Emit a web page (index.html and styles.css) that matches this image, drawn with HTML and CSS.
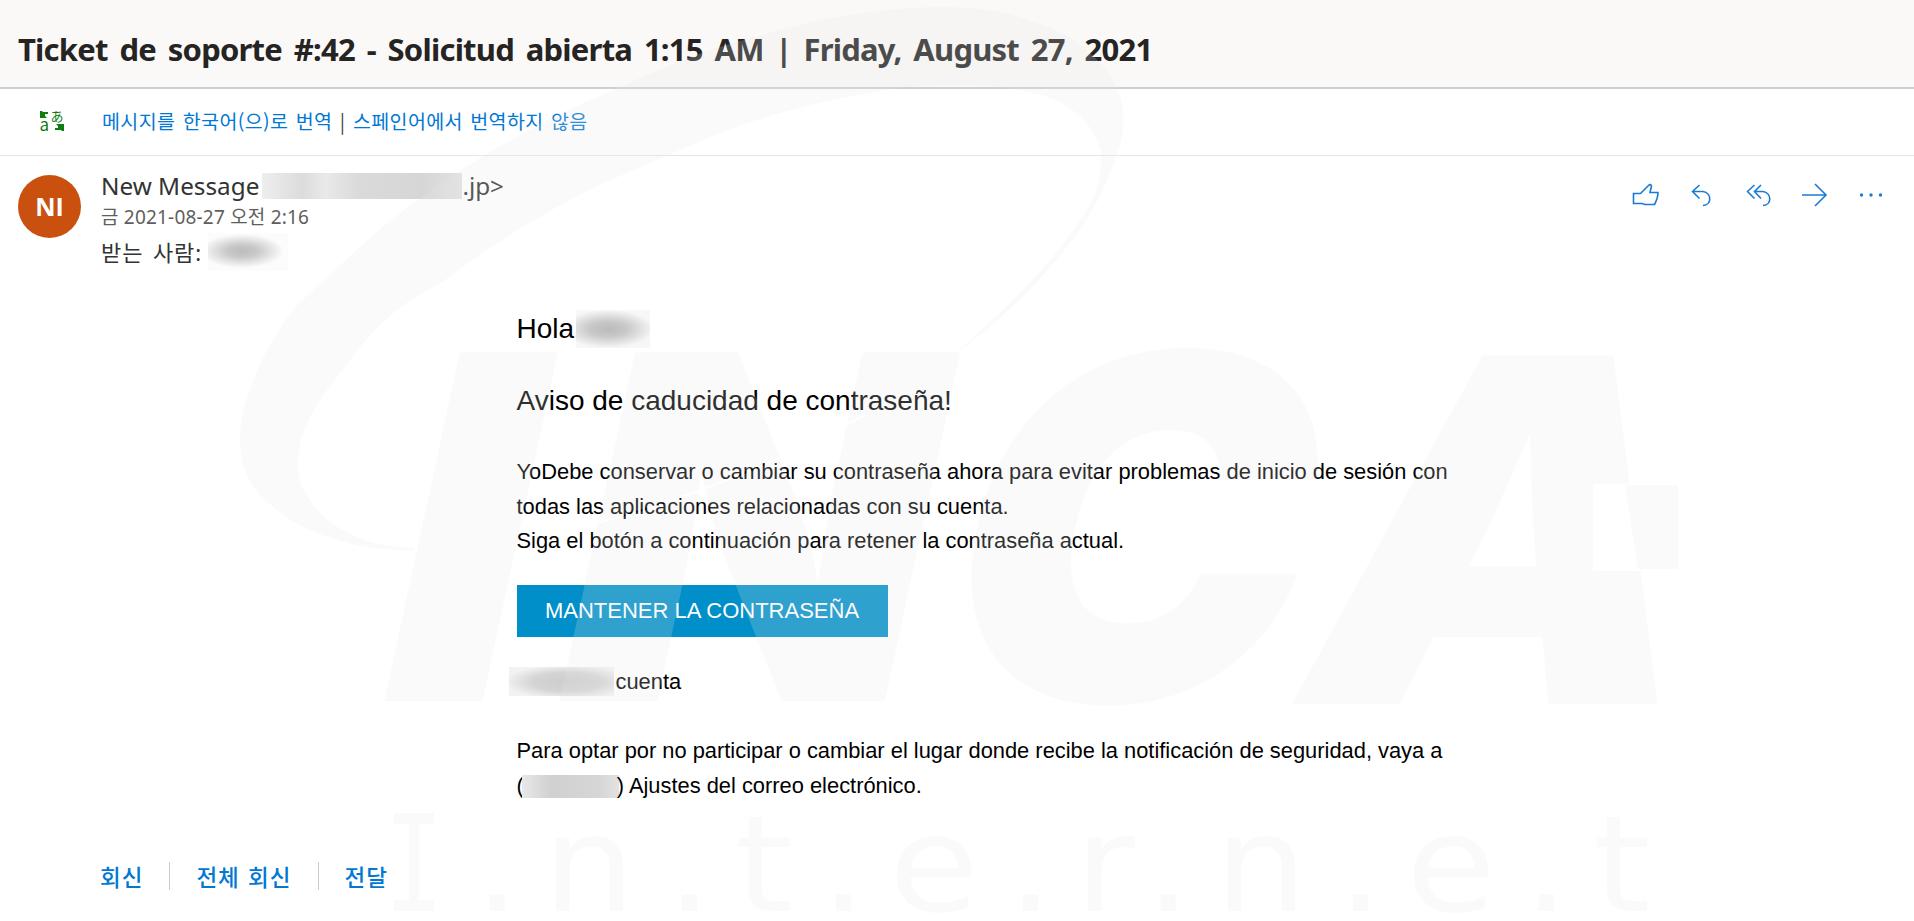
FILE: index.html
```html
<!DOCTYPE html>
<html lang="ko">
<head>
<meta charset="utf-8">
<title>Ticket de soporte #:42</title>
<link rel="stylesheet" href="styles.css">
</head>
<body>
<header class="subject"><h1>Ticket de soporte #:42 - Solicitud abierta 1:15 AM | Friday, August 27, 2021</h1></header>
<div class="translate">
  <svg class="translate-icon" width="24" height="24" viewBox="0 0 24 24"><path d="M0 2h2l1 1h5v2H5v2l2 2H0zM24 22h-2l-1-1h-6v-2h3v-2l-2-2h8z" fill="#107c10"/><text x="10.500" y="11.500" font-size="13">あ</text><text x="-0.500" y="22" font-size="17">a</text></svg>
  <p><a>메시지를 한국어(으)로 번역</a> <span class="bar">|</span> <a>스페인어에서 번역하지 않음</a></p>
</div>
<section class="sender">
  <div class="avatar">NI</div>
  <div class="meta">
    <div class="from"><span>New Message</span><i class="redact redact-from"></i><span>.jp&gt;</span></div>
    <div class="date">금 2021-08-27 오전 2:16</div>
    <div class="to"><span>받는 사람:</span><i class="redact redact-to"></i></div>
  </div>
  <div class="actions">
    <svg width="28" height="24" viewBox="0 0 28 24"><path d="M1.500 10.500H8.500L16.500 2.500Q18.500.500 19.500 3L18 9.500H26Q26 15 22.500 21.500H13L10 20.500H1.500z"/></svg>
    <svg width="24" height="24" viewBox="0 0 24 24"><path d="M8.500 2 1.500 8.500l7 7M1.500 8.500H12C21 10 21 22 12 22.500"/></svg>
    <svg width="25" height="24" viewBox="0 0 25 24"><path d="M8.500 2 1.500 8.500l7 7M15 2 8.500 8.500l6.500 7M8.500 8.500H17C26 10 26 22 17 22.500"/></svg>
    <svg width="26" height="24" viewBox="0 0 26 24"><path d="M0 12H24M13 1l11 11-11 11"/></svg>
    <svg width="24" height="24" viewBox="0 0 24 24"><g class="dots"><circle cx="2.500" cy="12" r="1.700"/><circle cx="12" cy="12" r="1.700"/><circle cx="21.500" cy="12" r="1.700"/></g></svg>
  </div>
</section>
<main class="message">
  <p class="lead hello"><span>Hola</span><i class="redact redact-name"></i></p>
  <p class="lead notice">Aviso de caducidad de contraseña!</p>
  <p class="copy">YoDebe conservar o cambiar su contraseña ahora para evitar problemas de inicio de sesión con<br>todas las aplicaciones relacionadas con su cuenta.<br>Siga el botón a continuación para retener la contraseña actual.</p>
  <a class="cta">MANTENER LA CONTRASEÑA</a>
  <p class="copy account"><i class="redact redact-account"></i><span>cuenta</span></p>
  <p class="copy">Para optar por no participar o cambiar el lugar donde recibe la notificación de seguridad, vaya a<br>(<i class="redact redact-domain"></i>) Ajustes del correo electrónico.</p>
</main>
<footer class="replies"><a>회신</a><a>전체 회신</a><a>전달</a></footer>
<svg class="watermark" width="1914" height="921" viewBox="0 0 1914 921" aria-hidden="true">
  <defs><mask id="cut" maskUnits="userSpaceOnUse" x="0" y="0" width="1914" height="921"><rect width="1914" height="921" fill="#fff"/><path d="M1593 484H1700V571H1593z"/><path d="M520 540Q690 510 865 415" fill="none" stroke="#000" stroke-width="2"/></mask></defs>
  <g class="ink">
    <path d="M414 551C365 548 355 546 328 537C300 527 290 520 277 510C262 498 254 490 248 477C242 465 240 452 240 437C240 420 244 405 251 387C258 367 265 352 277 333C292 308 305 297 325 280C372 232 430 187 485 155C530 128 570 108 620 87C665 66 705 50 755 37C820 18 880 7 946 7C975 7 1005 11 1029 20C1055 28 1075 38 1090 53C1105 66 1112 77 1118 90C1122 100 1124 112 1123.500 123C1123 137 1120 147 1116 157C1111 172 1106 183 1098 200C1080 233 1065 250 1039 280Q1000 322 956 353Q1060 262 1094 197C1099 185 1101 170 1101 157C1101 148 1097 138 1090 128C1085 119 1077 113 1069 108C1057 100 1045 95 1029 92C1000 86 975 84 947 85C925 85 905 87 886 90C845 97 805 105 763 118C730 128 700 141 669 155C645 165 622 175 600 185C540 214 490 246 445 280C425 292 405 302 389 317C373 331 360 346 348 363C335 380 322 395 312 413C303 431 298 445 298 463C298 477 301 489 310 500C318 513 330 523 343 530C358 538 370 543 384 545C395 547 405 548 414 548z"/>
    <g mask="url(#cut)" class="logo">
      <text transform="translate(361,701) skewX(-12.200) scale(1.040,1)">I</text>
      <text transform="translate(537,701) skewX(-12.200) scale(1.005,1)">N</text>
      <text transform="translate(923,701) skewX(-12.200) scale(1.010,1)">C</text>
      <text transform="translate(1281,704) skewX(-12.200) scale(1.017,1)">A</text>
    </g>
    <path d="M1625 485H1678V569H1638z"/>
    <text class="mono" transform="translate(384,911) scale(.75,1)">I</text>
    <text class="net" transform="scale(1.1,1)" y="911" x="431 493.400 605.700 668.500 745.700 808 915.700 977 1041 1104 1215.700 1278 1385 1448.500">.n.t.e.r.n.e.t</text>
  </g>
</svg>
</body>
</html>
```
FILE: styles.css
```css
* { box-sizing: border-box; }
body { margin: 0; height: 921px; overflow: hidden; position: relative; background: #fff; color: #000; font-family: "Liberation Sans", "Noto Sans CJK KR", sans-serif; }
p, h1 { margin: 0; }
.subject { height: 89px; padding: 10px 18px 0; display: flex; align-items: center; background: #faf9f8; border-bottom: 2px solid #cfcfd0; }
h1 { font: bold 31px/44px "Noto Sans", sans-serif; letter-spacing: -.78px; word-spacing: 4.500px; color: #252423; white-space: nowrap; }
.translate { height: 67px; display: flex; align-items: center; gap: 38px; padding: 0 0 2px 40px; border-bottom: 1px solid #e6e6e6; font: 19.500px/30px "Noto Sans CJK KR", sans-serif; color: #0078d4; }
.translate p { letter-spacing: .4px; word-spacing: 1.500px; }
.translate-icon { fill: #107c10; overflow: visible; }
.bar { color: #444; }
.sender { height: 134px; display: flex; padding: 13px 31px 0 18px; color: #333; }
.avatar { width: 63px; height: 63px; margin-top: 6px; border-radius: 50%; background: #ca5010; color: #fff; font: bold 25px/63px "Open Sans", sans-serif; text-align: center; }
.meta { margin-left: 20px; flex: 1; font-family: "Noto Sans", "Noto Sans CJK KR", sans-serif; }
.from { display: flex; align-items: center; font-size: 24.300px; line-height: 34px; }
.date { font-size: 19px; line-height: 29px; letter-spacing: .2px; color: #605e5c; }
.to { display: flex; align-items: center; font-size: 22px; line-height: 40px; letter-spacing: .9px; word-spacing: 3px; }
.redact { display: inline-block; background: #e9e9e9; }
.redact-from { width: 200px; height: 26px; margin-left: 3px; background: linear-gradient(90deg, #eee, #dcdcdc 20%, #e9e9e9 32%, #dadada 48%, #d6d6d6 80%, #e2e2e2); }
.redact-to { width: 80px; height: 38px; margin-left: 6px; background: radial-gradient(ellipse 42px 17px at 34px 18px, #bcbcbc, #c8c8c8 35%, #fcfcfc); }
.actions { display: flex; gap: 31px; padding-top: 14px; }
.actions svg { fill: none; stroke: #1a7bd6; stroke-width: 1.600; }
.actions .dots { fill: #1a7bd6; stroke: none; }
.message { margin-left: 516.500px; width: 1000px; height: 560px; padding-top: 19px; }
.lead { font-size: 28px; line-height: 40px; white-space: nowrap; }
.hello { display: flex; align-items: center; }
.redact-name { width: 74px; height: 38px; margin-left: 2px; background: radial-gradient(ellipse 46px 19px at 32px 19px, #bbb, #c8c8c8 40%, #f7f7f7); }
.notice { margin: 32px 0 34px; }
.copy { font-size: 21.870px; line-height: 34.500px; white-space: nowrap; }
.cta { display: block; width: 371px; height: 52px; margin: 26px 0 28px; background: #008fc8; color: #fff; font-size: 22px; line-height: 51px; text-align: center; }
.account { display: flex; align-items: center; margin: 0 0 35px -8px; }
.redact-account { width: 105px; height: 29px; margin-right: 2px; background: radial-gradient(ellipse 62px 17px at 58px 15px, #cdcdcd, #d4d4d4 55%, #f2f2f2); }
.redact-domain { width: 97px; height: 23px; margin: 0 -2px; vertical-align: middle; background: linear-gradient(90deg, #e8e8e8, #d0d0d0 30%, #d6d6d6 80%, #e2e2e2); }
.replies { display: flex; align-items: center; padding-left: 100px; margin-top: 12px; font: 500 22.500px/28px "Noto Sans CJK KR", sans-serif; letter-spacing: 1px; word-spacing: 1px; color: #0078d4; }
.replies a + a { border-left: 1px solid #ccc; padding-left: 26px; margin-left: 26px; }
.watermark { position: absolute; left: 0; top: 0; pointer-events: none; }
.ink { fill: #e8e8e8; opacity: .2; }
.logo { font: 900 479px Inter, sans-serif; }
.net { font: 133px "DejaVu Sans", sans-serif; }
.mono { font: 133px "DejaVu Sans Mono", monospace; }
```
